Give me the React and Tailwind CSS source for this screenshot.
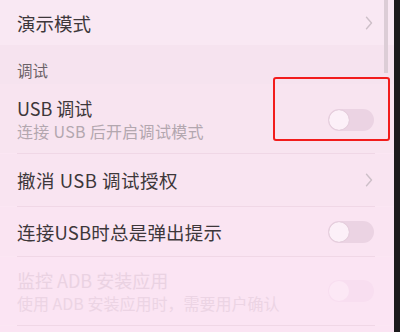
import React from "react";

const font = { fontFamily: '"Noto Sans CJK SC", "Noto Sans", sans-serif' };

function Chevron() {
  return (
    <svg width="8" height="14" viewBox="0 0 8 14" className="shrink-0">
      <path d="M1.5 1.3 L6.5 7 L1.5 12.7" fill="none" stroke="#cdbfc8" strokeWidth="1.4" strokeLinecap="round" strokeLinejoin="round" />
    </svg>
  );
}

function Toggle({ faded }) {
  return (
    <div className={`w-[46px] h-[22px] rounded-full flex items-center px-[1px] shrink-0 ${faded ? "bg-[#f8def0]" : "bg-[#ebd3e3]"}`}>
      <div className={`w-[20px] h-[20px] rounded-full ${faded ? "bg-[#fce8f5]" : "bg-[#fcf0f8] shadow-[0_0_1px_rgba(120,80,100,0.35)]"}`} />
    </div>
  );
}

function Divider() {
  return <div className="mx-[17px] mr-[19px] h-px bg-[#f0d7e6]" />;
}

export default function App() {
  return (
    <div className="w-[400px] h-[332px] flex overflow-hidden" style={font}>
      <div className="relative flex-1 flex flex-col bg-[#fbe6f3]">
        <div className="h-[45px] flex items-center justify-between pl-[17px] pr-[21px] bg-[#f9e8f3]">
          <span className="text-[18.5px] leading-[24px] text-[#3d373a]">演示模式</span>
          <Chevron />
        </div>
        <div className="h-[39px] flex items-end pl-[17px] pb-[4px] bg-[#f6e3ef]">
          <span className="text-[15.5px] leading-[20px] text-[#6b6268]">调试</span>
        </div>
        <div className="h-[69px] flex items-center justify-between pl-[17px] pr-[20px] bg-[#f8e4f0]">
          <div className="flex flex-col pt-[1px]">
            <span className="text-[18px] leading-[24px] text-[#3d373a]">USB 调试</span>
            <span className="text-[16px] leading-[22px] text-[#b3a7af] tracking-[0.3px]">连接 USB 后开启调试模式</span>
          </div>
          <div className="mt-[2px]">
            <Toggle />
          </div>
        </div>
        <Divider />
        <div className="h-[52px] flex items-center justify-between pl-[17px] pr-[21px] bg-[#f9e4f1]">
          <span className="text-[18.5px] leading-[24px] text-[#3d373a] tracking-[0.5px]">撤消 USB 调试授权</span>
          <Chevron />
        </div>
        <Divider />
        <div className="h-[49px] flex items-center justify-between pl-[17px] pr-[20px] bg-[#fae4f2]">
          <span className="text-[18.5px] leading-[24px] text-[#3d373a] tracking-[0.2px]">连接USB时总是弹出提示</span>
          <Toggle />
        </div>
        <Divider />
        <div className="h-[68px] flex items-center justify-between pl-[17px] pr-[20px] bg-[#fbe4f3]">
          <div className="flex flex-col">
            <span className="text-[18px] leading-[24px] text-[#ead2e2]">监控 ADB 安装应用</span>
            <span className="text-[16px] leading-[22px] text-[#ecd4e4]">使用 ADB 安装应用时，需要用户确认</span>
          </div>
          <Toggle faded />
        </div>
        <Divider />
        <div className="flex-1 bg-[#fbe4f3]" />
        <div className="absolute left-[384px] top-0 w-[4px] h-[73px] bg-[#dccdd6]" />
        <div className="absolute left-[273px] top-[77px] w-[117px] h-[64px] border-2 border-[#f21c1c] rounded-[3px]" />
      </div>
      <div className="w-[6px] bg-[#1c1a1c]" />
    </div>
  );
}
